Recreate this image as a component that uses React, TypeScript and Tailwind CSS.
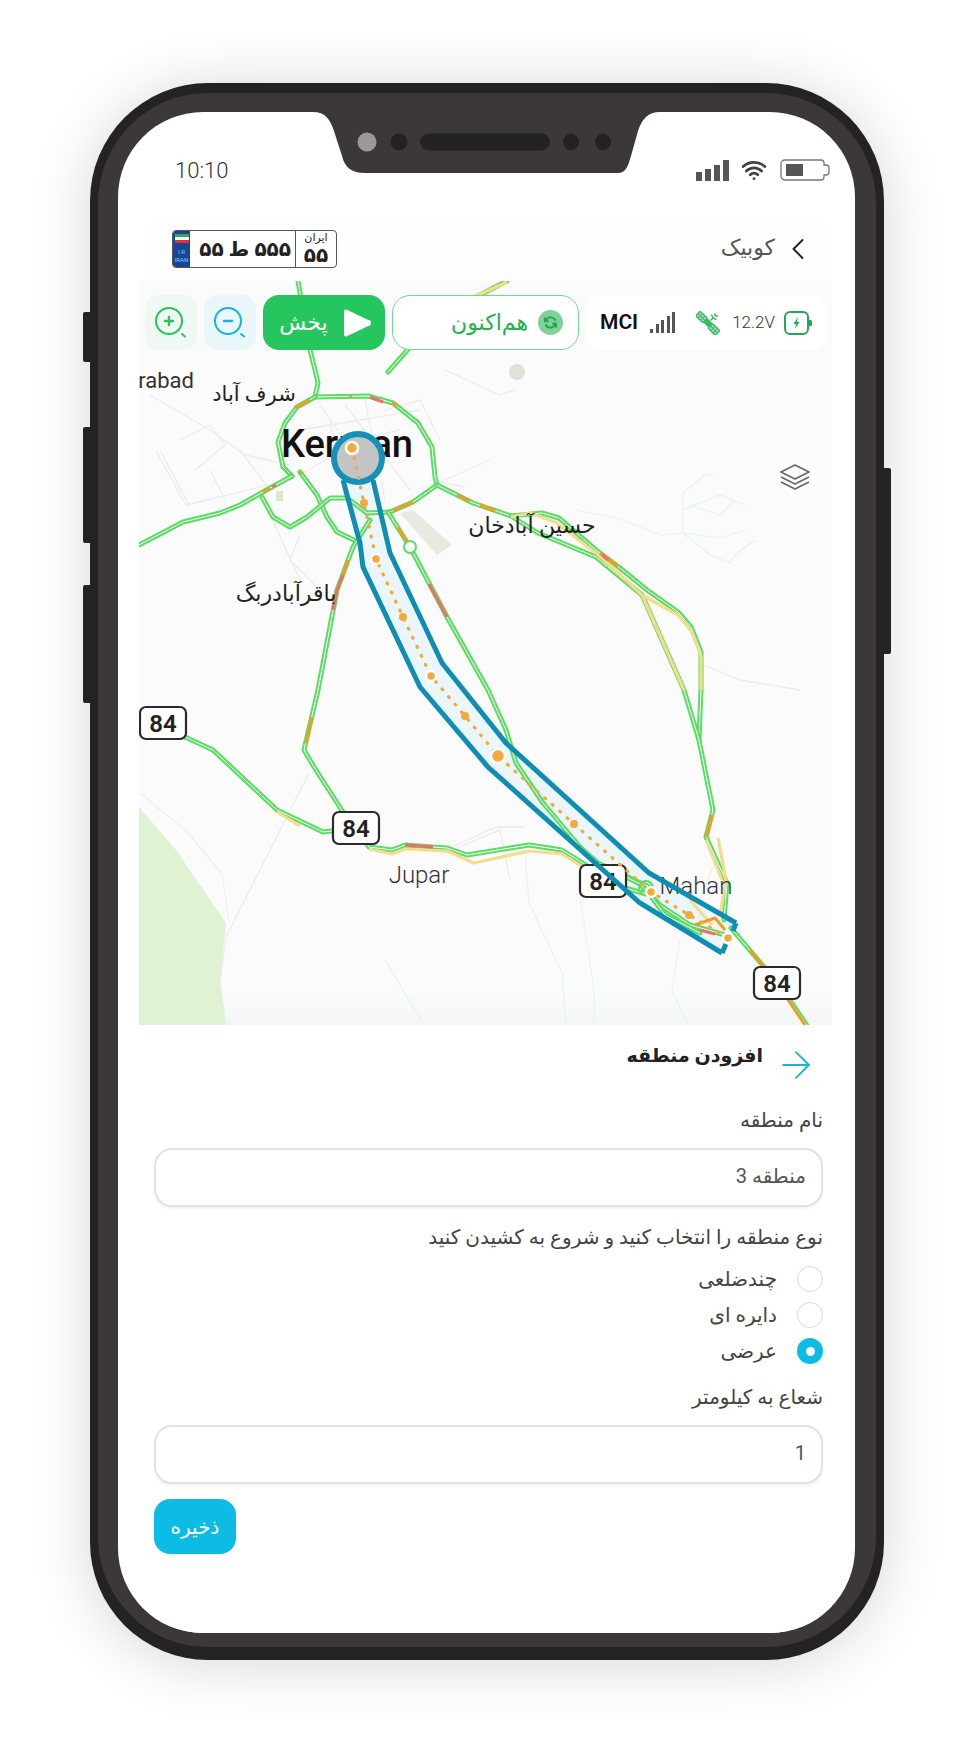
import { ArrowRight, ChevronLeft, Wifi } from "lucide-react";

const FONT = "[font-family:Roboto,'DejaVu_Sans',sans-serif]";

// map geometry uses page coordinates, viewBox lines up with the map box
const greenRoads = [
  "298,281 310,350 315,370 318,383 315,397",
  "315,397 368,396 393,403 418,423 432,447 435,477 437,485",
  "315,397 297,407 285,423 278,442 283,467 292,476",
  "292,476 263,492 240,505 220,513 183,522 139,545",
  "300,472 317,495 327,517 337,532 358,542",
  "262,497 273,517 290,527 307,517 330,498 347,498 367,513 390,512 413,502 437,485",
  "437,485 473,503 511,516 542,513 559,518 596,550 620,568 647,590 678,612 691,627 701,652 701,690 699,740",
  "511,516 538,533 596,557 642,595 684,690 699,740 713,810 706,837 727,883 724,920",
  "731,928 764,967 791,1002 810,1030",
  "163,723 185,737 213,750 277,810 323,832 356,828 369,847 392,850 405,845 447,848 467,855 529,845 562,850 589,867",
  "370,520 353,547 337,590 318,690 304,750 314,767 343,812",
  "388,512 410,547 447,617 488,690 506,730 516,763 543,803 580,847 598,863 649,887",
  "388,372 410,347 470,300 507,281",
  "604,866 640,884 660,905 690,925 725,935",
  "625,888 650,895 665,915 700,933",
];

const yellowRoads = [
  "511,517 530,513 555,522 596,553 642,595 678,615 692,632 701,656 701,690",
  "642,595 684,690",
  "369,849 392,854 405,849 447,851 474,863 529,851 562,854 589,871",
  "467,300 507,282",
  "277,812 300,826",
  "690,900 712,925",
  "718,838 726,880 720,915",
  "706,840 722,880",
];

const hotSegments: [string, string][] = [
  ["#f59a23", "295,408 310,400"],
  ["#f59a23", "349,397 352,397"],
  ["#f56b6b", "370,397 383,402"],
  ["#f59a23", "392,403 397,405"],
  ["#f56b6b", "272,487 276,485"],
  ["#f59a23", "263,492 270,488"],
  ["#f59a23", "300,472 302,474"],
  ["#f59a23", "393,511 413,502"],
  ["#f59a23", "457,495 470,501"],
  ["#f59a23", "480,505 495,511"],
  ["#f59a23", "600,553 618,566"],
  ["#f56b6b", "602,555 608,560"],
  ["#f59a23", "398,527 408,544"],
  ["#f56b6b", "429,584 447,617"],
  ["#f59a23", "343,575 348,560"],
  ["#f56b6b", "343,575 337,590 333,610"],
  ["#f59a23", "312,717 306,743"],
  ["#f56b6b", "405,845 433,847"],
  ["#f59a23", "706,837 712,815"],
  ["#f59a23", "750,950 764,967"],
  ["#f59a23", "785,995 805,1025"],
  ["#f59a23", "695,925 715,918 725,930"],
  ["#f56b6b", "700,930 715,934"],
];

const cityStreets = [
  "156,451 186,505",
  "160,450 190,507",
  "186,505 290,480 340,452",
  "210,470 225,500",
  "240,450 270,490",
  "180,440 210,425 225,445 195,470",
  "150,395 210,430 245,455 290,465",
  "320,405 372,480",
  "345,405 410,490",
  "300,430 420,410",
  "290,455 400,430",
  "330,420 345,500",
  "365,400 385,500",
  "440,482 490,460",
  "440,482 465,487",
  "268,510 300,580",
  "300,535 290,560 320,590",
  "385,410 420,400 440,440",
  "445,370 500,395 515,390",
  "309,773 226,937 220,983 226,1025",
  "451,847 497,827 525,827",
  "440,855 500,830 510,880",
  "712,868 700,900",
  "701,664 740,680 800,690",
];

const streams = [
  "576,510 617,518 661,535 683,533 720,538 745,530",
  "683,533 683,493 705,475 715,475",
  "683,510 720,495 728,498 745,505",
  "683,533 710,555 730,563 735,555 755,540",
  "690,505 720,515 735,500",
  "140,793 185,830 222,873 229,923",
  "525,853 529,903 562,973 566,1025",
  "580,897 594,990 594,1025",
  "385,960 424,1025",
  "680,940 672,990 688,1025",
];

const routeDots: [number, number, number, boolean][] = [
  [352, 448, 6, true],
  [364, 503, 4, false],
  [376, 559, 5, true],
  [403, 617, 4, false],
  [431, 676, 5, true],
  [465, 716, 4, false],
  [498, 756, 7, true],
  [574, 824, 4, false],
  [651, 892, 5, true],
  [689, 915, 4, false],
  [728, 938, 5, true],
];

const shieldSpots = [
  [163, 723],
  [356, 828],
  [603, 881],
  [777, 983],
];

function MapCanvas() {
  const route = routeDots.map((d) => `${d[0]},${d[1]}`).join(" ");
  return (
    <svg viewBox="139 281 693 744" className="absolute inset-0 h-full w-full">
      <defs>
        <linearGradient id="fade" x1="0" y1="0" x2="0" y2="1">
          <stop offset="0" stopColor="#ffffff" stopOpacity="0" />
          <stop offset="1" stopColor="#f3f6f6" stopOpacity="1" />
        </linearGradient>
      </defs>
      <rect x="139" y="960" width="693" height="65" fill="url(#fade)" />
      <polygon points="139,807 176,850 226,923 220,983 226,1025 139,1025" fill="#dff3d3" />
      <polygon points="400,513 413,510 452,545 437,555" fill="#e9eadf" />
      <circle cx="517" cy="372" r="8" fill="#dfe3d7" />
      <rect x="276" y="491" width="7" height="10" fill="#dbe8cc" />
      {cityStreets.map((p) => (
        <polyline key={p} points={p} fill="none" stroke="#ececec" strokeWidth="1.3" />
      ))}
      {streams.map((p) => (
        <polyline key={p} points={p} fill="none" stroke="#e4f3f8" strokeWidth="1.2" />
      ))}

      {/* corridor fill sits under the roads */}
      <polygon
        points="343,480 360,543 363,567 420,687 488,767 640,903 722,953 736,923 649,873 506,743 442,663 390,553 373,480"
        fill="#eaf6fa"
      />

      {greenRoads.map((p) => (
        <g key={p} fill="none" strokeLinejoin="round" strokeLinecap="round">
          <polyline points={p} stroke="#5bdc63" strokeWidth="5" />
          <polyline points={p} stroke="#ffffff" strokeWidth="1" />
        </g>
      ))}
      {yellowRoads.map((p) => (
        <polyline key={p} points={p} fill="none" stroke="#f3dc8e" strokeWidth="3.2" strokeLinejoin="round" />
      ))}
      {hotSegments.map(([c, p]) => (
        <polyline key={p} points={p} fill="none" stroke={c} strokeWidth="3" strokeLinejoin="round" />
      ))}
      <circle cx="410" cy="547" r="6" fill="#fff" stroke="#5bdc63" strokeWidth="2" />
      <circle cx="646" cy="888" r="7" fill="none" stroke="#5bdc63" strokeWidth="2" />

      <g fill="#111" fontFamily="Roboto, 'DejaVu Sans', sans-serif">
        <text x="194" y="388" textAnchor="end" fontSize="22" fill="#333">
          rabad
        </text>
        <text x="254" y="401" textAnchor="middle" fontSize="21" fill="#222">
          شرف آباد
        </text>
        <text x="347" y="457" textAnchor="middle" fontSize="38" fontWeight="500">
          Kerman
        </text>
        <text x="532" y="533" textAnchor="middle" fontSize="22" fill="#222">
          حسین آبادخان
        </text>
        <text x="286" y="601" textAnchor="middle" fontSize="22" fill="#222">
          باقرآبادربگ
        </text>
        <text x="419" y="883" textAnchor="middle" fontSize="24" fontWeight="300" fill="#333">
          Jupar
        </text>
        <text x="696" y="894" textAnchor="middle" fontSize="24" fontWeight="300" fill="#333">
          Mahan
        </text>
      </g>

      {shieldSpots.map(([x, y]) => (
        <g key={x}>
          <rect x={x - 23} y={y - 16} width="46" height="32" rx="6" fill="#fff" stroke="#2a2a2a" strokeWidth="2.2" />
          <text
            x={x}
            y={y + 9}
            textAnchor="middle"
            fontSize="24"
            fontWeight="600"
            fill="#222"
            fontFamily="Roboto, sans-serif"
          >
            84
          </text>
        </g>
      ))}

      <polyline
        points="343,480 360,543 363,567 420,687 488,767 640,903 722,953"
        fill="none"
        stroke="#0f8db3"
        strokeWidth="5"
      />
      <polyline
        points="736,923 649,873 506,743 442,663 390,553 373,480"
        fill="none"
        stroke="#0f8db3"
        strokeWidth="5"
      />
      <polyline points="722,953 726,944" fill="none" stroke="#0f8db3" strokeWidth="5" />
      <polyline points="736,923 733,931" fill="none" stroke="#0f8db3" strokeWidth="5" />

      <circle cx="358" cy="458" r="24" fill="#c4c4c4" stroke="#1491b8" strokeWidth="6" />
      <polyline
        points={route}
        fill="none"
        stroke="#f5a93b"
        strokeWidth="3.2"
        strokeDasharray="1 9"
        strokeLinecap="round"
      />
      {routeDots.map(([x, y, r, ring]) => (
        <circle
          key={x}
          cx={x}
          cy={y}
          r={r}
          fill="#f5a93b"
          stroke={ring ? "#fff" : "none"}
          strokeWidth={ring ? 2.5 : 0}
        />
      ))}
    </svg>
  );
}

function ZoomIcon({ plus, color }: { plus?: boolean; color: string }) {
  return (
    <svg width="34" height="34" viewBox="0 0 34 34" fill="none" stroke={color} strokeWidth="2" strokeLinecap="round">
      <circle cx="15" cy="15" r="13" />
      <path d="M11 15h8" strokeWidth="2.4" />
      {plus && <path d="M15 11v8" strokeWidth="2.4" />}
      <path d="M28 28l3 2.5" />
    </svg>
  );
}

function SatelliteIcon() {
  return (
    <svg width="24" height="24" viewBox="0 0 24 24" fill="none" stroke="#39b768" strokeWidth="1.4">
      <g transform="translate(5.5 6) rotate(45)">
        <rect x="-5" y="-3.2" width="10" height="6.4" rx="1" fill="#a9e0bd" />
        <path d="M-1.700-3.200v6.400M1.700-3.200v6.400M-5 0h10" strokeWidth="1" />
      </g>
      <g transform="translate(18 18.500) rotate(45)">
        <rect x="-5" y="-3.2" width="10" height="6.400" rx="1" fill="#a9e0bd" />
        <path d="M-1.700-3.200v6.400M1.700-3.200v6.400M-5 0h10" strokeWidth="1" />
      </g>
      <rect x="-3" y="-2.200" width="6" height="4.400" transform="translate(12 12) rotate(45)" fill="#39b768" />
      <path d="M14.500 9.500l3-3M15.500 3.500c.5 2 2.500 4.500 5 5M19 2v3M22 5h-3" />
    </svg>
  );
}

function Plate() {
  return (
    <div className="flex h-[38px] w-[165px] overflow-hidden rounded-[4px] border border-[#555] bg-white" dir="ltr">
      <div className="flex w-[17px] flex-col items-center bg-[#1a4597] pt-[3px]">
        <div className="flex h-[9px] w-[14px] flex-col">
          <div className="h-[3px] bg-[#3aa655]" />
          <div className="h-[3px] bg-white" />
          <div className="h-[3px] bg-[#d8343a]" />
        </div>
        <div className="mt-[5px] text-center font-['Roboto'] text-[6px] leading-[8px] text-[#6fd0ee]">
          I.R
          <br />
          IRAN
        </div>
      </div>
      <div className="flex flex-1 items-center justify-end gap-[5px] pr-[4px] text-[20px] font-bold leading-none text-[#222]">
        <span>۵۵</span>
        <span>ط</span>
        <span>۵۵۵</span>
      </div>
      <div className="flex w-[41px] flex-col items-center border-l border-[#555] text-[#222]">
        <span className="text-[11px] leading-[13px]">ایران</span>
        <span className="text-[20px] font-bold leading-[22px]">۵۵</span>
      </div>
    </div>
  );
}

function Radio({ label, checked }: { label: string; checked?: boolean }) {
  return (
    <div className="flex h-[36px] items-center gap-[20px]">
      {checked ? (
        <span className="flex h-[26px] w-[26px] items-center justify-center rounded-full bg-[#0dbce4]">
          <span className="h-[9px] w-[9px] rounded-full bg-white" />
        </span>
      ) : (
        <span className="h-[26px] w-[26px] rounded-full border border-[#d9d9d9] bg-white" />
      )}
      <span className="text-[20px] text-[#444]">{label}</span>
    </div>
  );
}

function Field({ value }: { value: string }) {
  return (
    <input
      readOnly
      dir="rtl"
      value={value}
      className="h-[59px] w-full rounded-[18px] border-2 border-[#e2e2e2] bg-white px-[15px] pb-[4px] text-[20px] text-[#555] shadow-[0_2px_3px_rgba(0,0,0,0.05)] outline-none"
    />
  );
}

export default function App() {
  return (
    <div className={`h-[1748px] w-[956px] overflow-hidden bg-white pl-[90px] pt-[83px] ${FONT}`}>
      {/* Phone body */}
      <div className="relative h-[1577px] w-[794px] rounded-[118px] bg-[#242322] px-[8px] pb-[13px] pt-[10px] shadow-[0_4px_60px_rgba(0,0,0,0.16)]">
        <div className="absolute left-[-7px] top-[229px] h-[50px] w-[8px] rounded-l-[2px] bg-[#242322]" />
        <div className="absolute left-[-7px] top-[344px] h-[116px] w-[8px] rounded-l-[2px] bg-[#242322]" />
        <div className="absolute left-[-7px] top-[502px] h-[118px] w-[8px] rounded-l-[2px] bg-[#242322]" />
        <div className="absolute right-[-7px] top-[385px] h-[186px] w-[8px] rounded-r-[2px] bg-[#242322]" />

        <div className="h-full rounded-[110px] bg-[#3c3837] pb-[14px] pl-[20px] pr-[21px] pt-[19px]">
          <div className="relative flex h-full flex-col overflow-hidden rounded-[85px] bg-white">
            {/* Status bar */}
            <div className="flex h-[105px] shrink-0 items-start justify-between pl-[57px] pr-[25px] pt-[45px]">
              <span className="text-[22px] font-light leading-[28px] text-[#333]">10:10</span>
              <div className="flex items-center gap-[12px]">
                <div className="flex h-[21px] items-end gap-[3px]">
                  <span className="h-[9px] w-[6px] bg-[#555]" />
                  <span className="h-[12px] w-[6px] bg-[#555]" />
                  <span className="h-[16px] w-[6px] bg-[#555]" />
                  <span className="h-[21px] w-[6px] bg-[#555]" />
                </div>
                <Wifi size={26} strokeWidth={2.6} color="#444" />
                <svg width="50" height="22" viewBox="0 0 50 22" fill="none" className="ml-[1px]">
                  <path
                    d="M5 1h36a3 3 0 0 1 3 3v2h2a3 3 0 0 1 3 3v4a3 3 0 0 1-3 3h-2v2a3 3 0 0 1-3 3H5a4 4 0 0 1-4-4V5a4 4 0 0 1 4-4z"
                    stroke="#777"
                    strokeWidth="1.3"
                  />
                  <rect x="6" y="5" width="17" height="12" fill="#555" />
                </svg>
              </div>
            </div>

            {/* Notch */}
            <svg
              viewBox="0 0 347 61"
              className="absolute left-[195px] top-0 h-[61px] w-[347px]"
              fill="#3c3837"
            >
              <path d="M0 0C12 0 17 7 21 19L29 44C32 56 39 61 52 61L305 61C313 61 315 54 318 44L325 19C329 7 335 0 347 0Z" />
              <circle cx="54" cy="30" r="9.5" fill="#999" />
              <circle cx="86" cy="30" r="8.5" fill="#222" />
              <rect x="107" y="21.5" width="130" height="17" rx="8.5" fill="#222" />
              <circle cx="258" cy="30" r="8" fill="#222" />
              <circle cx="290" cy="30" r="8" fill="#222" />
            </svg>

            {/* Vehicle header */}
            <div className="ml-[27px] mr-[28px] flex h-[64px] shrink-0 items-center justify-between rounded-t-[14px] bg-[#fefefe] pl-[27px] pr-[11px]">
              <Plate />
              <div className="flex items-center gap-[5px]">
                <span className="pb-[4px] text-[22px] text-[#555]">کوبیک</span>
                <ChevronLeft size={36} strokeWidth={1.3} color="#222" />
              </div>
            </div>

            {/* Map */}
            <div className="relative ml-[21px] mr-[23px] h-[744px] shrink-0 overflow-hidden bg-[#fbfbfb]">
              <MapCanvas />

              <div className="absolute left-[6px] right-[5px] top-[14px] flex h-[55px] gap-[7px]">
                <div className="flex w-[52px] items-center justify-center rounded-[14px] bg-[#eff8f3]">
                  <ZoomIcon plus color="#25c65d" />
                </div>
                <div className="flex w-[52px] items-center justify-center rounded-[14px] bg-[#e9f6fa]">
                  <ZoomIcon color="#14b3e0" />
                </div>
                <div className="flex w-[122px] items-center justify-center gap-[15px] rounded-[16px] bg-[#25c65d] pl-[2px]">
                  <span className="text-[22px] text-white">پخش</span>
                  <svg width="28" height="30" viewBox="0 0 28 30">
                    <path d="M3 3.500 25 14a1 1 0 0 1 0 2L3 26.500Z" fill="#fff" stroke="#fff" strokeWidth="4" strokeLinejoin="round" />
                  </svg>
                </div>
                <div
                  dir="rtl"
                  className="flex w-[187px] items-center gap-[10px] rounded-[18px] border border-[#72d98a] bg-white pr-[15px]"
                >
                  <span className="flex h-[25px] w-[25px] items-center justify-center rounded-full bg-[#7fd09a]">
                    <svg width="15" height="15" viewBox="0 0 24 24" fill="none" stroke="#20a64c" strokeWidth="3">
                      <path d="M20 9A8.500 8.500 0 0 0 5 7.500L3 10M4 15a8.500 8.500 0 0 0 15 1.500l2-2.500" />
                      <path d="M3 4v6h6M21 20v-6h-6" />
                    </svg>
                  </span>
                  <span className="text-[22px] text-[#25b052]">هم‌اکنون</span>
                </div>
                <div className="flex flex-1 items-center rounded-[16px] bg-white pl-[14px]" dir="ltr">
                  <span className="text-[21px] font-semibold leading-none text-[#111]">MCI</span>
                  <div className="ml-[12px] flex h-[21px] items-end gap-[2.5px]">
                    <span className="h-[4px] w-[3px] bg-[#555]" />
                    <span className="h-[9px] w-[3px] bg-[#555]" />
                    <span className="h-[13px] w-[3px] bg-[#555]" />
                    <span className="h-[17px] w-[3px] bg-[#555]" />
                    <span className="h-[21px] w-[3px] bg-[#555]" />
                  </div>
                  <div className="ml-[21px]">
                    <SatelliteIcon />
                  </div>
                  <span className="ml-[12px] text-[17px] font-light text-[#333]">12.2V</span>
                  <svg width="29" height="24" viewBox="0 0 29 24" fill="none" className="ml-[9px]">
                    <rect x="1" y="1" width="23" height="22" rx="5" stroke="#22a850" strokeWidth="2" />
                    <path d="M25 9h1.500a1.500 1.500 0 0 1 1.500 1.500v3a1.500 1.500 0 0 1-1.500 1.500H25z" fill="#22a850" />
                    <path d="M14 6l-4.500 7H12l-1 5 4.500-7H13z" fill="#22a850" />
                  </svg>
                </div>
              </div>

              <div className="absolute left-[630px] top-[170px] flex h-[52px] w-[52px] items-center justify-center rounded-full bg-white/40">
                <svg width="30" height="26" viewBox="0 0 30 26" fill="none" stroke="#6a6a6a" strokeWidth="1.8" strokeLinejoin="round">
                  <path d="M15 1 29 8 15 15 1 8Z" />
                  <path d="M1 13l14 7 14-7" />
                  <path d="M1 18l14 7 14-7" />
                </svg>
              </div>
            </div>

            {/* Add zone form */}
            <div
              dir="rtl"
              className="relative z-10 ml-[21px] mr-[23px] flex flex-1 flex-col rounded-t-[12px] bg-white pl-[15px] pr-[9px]"
            >
              <div className="flex h-[81px] shrink-0 items-start gap-[11px] pr-[5px]">
                <ArrowRight size={44} strokeWidth={1} color="#18b4dc" className="mt-[18px]" />
                <h2 className="mt-[16px] text-[19px] font-bold leading-[30px] text-[#222]">افزودن منطقه</h2>
              </div>

              <label className="h-[28px] text-[20px] leading-[28px] text-[#444]">نام منطقه</label>
              <div className="mt-[14px]">
                <Field value="منطقه 3" />
              </div>

              <p className="mt-[16px] h-[28px] text-[20px] leading-[28px] text-[#444]">
                نوع منطقه را انتخاب کنید و شروع به کشیدن کنید
              </p>
              <div className="mt-[10px] flex flex-col">
                <Radio label="چندضلعی" />
                <Radio label="دایره ای" />
                <Radio label="عرضی" checked />
              </div>

              <label className="mt-[14px] h-[28px] text-[20px] leading-[28px] text-[#444]">شعاع به کیلومتر</label>
              <div className="mt-[14px]">
                <Field value="1" />
              </div>

              <button className="mt-[15px] h-[55px] w-[82px] self-end rounded-[16px] bg-[#0dbce4] text-[20px] text-white">
                ذخیره
              </button>
            </div>
          </div>
        </div>
      </div>
    </div>
  );
}
